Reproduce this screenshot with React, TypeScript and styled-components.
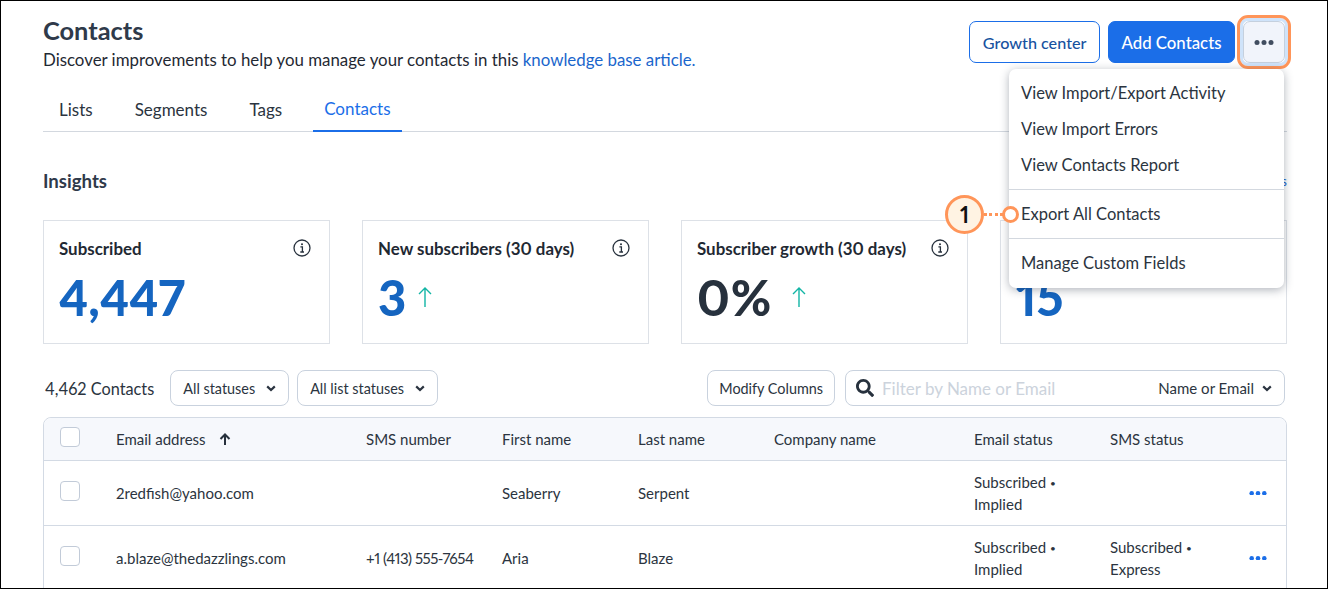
import React, { FC } from 'react';
import styled, { createGlobalStyle } from 'styled-components';
import { FaSearch } from 'react-icons/fa';

const GlobalStyle = createGlobalStyle`
  html, body {
    margin: 0;
    padding: 0;
    background: #fff;
  }
  body {
    font-family: Lato, 'Liberation Sans', sans-serif;
    font-variant-numeric: proportional-nums;
    color: #2b3440;
  }
`;

const Frame = styled.div`
  position: relative;
  box-sizing: border-box;
  width: 1328px;
  height: 589px;
  padding: 0 40px 0 42px;
  border: 1px solid #000;
  overflow: hidden;
  background: #fff;
`;

const Header = styled.div`
  display: flex;
  justify-content: space-between;
  align-items: flex-start;
  height: 91px;
  padding-top: 14px;
  box-sizing: border-box;
`;

const Title = styled.h1`
  margin: 0;
  font-size: 25.4px;
  line-height: 30px;
  font-weight: 700;
  color: #2f3a4a;
`;

const Lead = styled.p`
  margin: 4px 0 0;
  font-size: 16.85px;
  line-height: 22px;
  color: #1f2933;
`;

const Link = styled.a`
  color: #1a66cc;
`;

const Actions = styled.div`
  display: flex;
  gap: 8px;
  margin: 6px 2px 0 0;
`;

const Button = styled.button<{ $primary?: boolean }>`
  height: 42px;
  padding: 0 12.5px;
  border-radius: 7px;
  border: 1px solid #1b6ee8;
  background: ${p => (p.$primary ? '#1b6ee8' : '#fff')};
  color: ${p => (p.$primary ? '#fff' : '#17529f')};
  font: 500 ${p => (p.$primary ? '16.8px' : '16.2px')} Lato, sans-serif;
`;

const MoreButton = styled.button`
  position: relative;
  display: flex;
  align-items: center;
  justify-content: center;
  width: 42px;
  height: 42px;
  padding: 0;
  border-radius: 7px;
  border: 1px solid #c5d0de;
  background: #f1f4fb;
  color: #414d60;

  &::after {
    content: '';
    position: absolute;
    inset: -7px;
    border: 3px solid #ff9559;
    border-radius: 11px;
    box-shadow: inset 0 0 0 3px #cfe3fa;
  }
`;

const Tabs = styled.div`
  display: flex;
  gap: 20px;
  height: 39px;
  padding-left: 5px;
  border-bottom: 1px solid #d3d8df;
`;

const Tab = styled.div<{ $active?: boolean }>`
  box-sizing: border-box;
  height: 40px;
  padding: ${p => (p.$active ? '6px' : '7px')} 11px 0;
  font-size: 17px;
  line-height: 22px;
  color: ${p => (p.$active ? '#1b6ee8' : '#2b3440')};
  border-bottom: 2px solid ${p => (p.$active ? '#1b6ee8' : 'transparent')};
`;

const InsightsRow = styled.div`
  display: flex;
  justify-content: space-between;
  align-items: center;
  height: 38px;
  margin-top: 30px;
`;

const SectionTitle = styled.h2`
  margin: 0;
  font-size: 18.6px;
  font-weight: 700;
  color: #2f3a4a;
`;

const SmallLink = styled.a`
  font-size: 13px;
  color: #1a66cc;
`;

const Cards = styled.div`
  display: grid;
  grid-template-columns: repeat(4, 287px);
  gap: 32px;
  margin-top: 20px;
`;

const Card = styled.div`
  box-sizing: border-box;
  height: 124px;
  padding: 15px 18px 0 15px;
  border: 1px solid #dde1e7;
`;

const CardHead = styled.div`
  display: flex;
  justify-content: space-between;
  align-items: center;
  min-height: 24px;
  font-size: 16.9px;
  font-weight: 700;
  color: #1f2933;
`;

const CardValue = styled.div<{ $dark?: boolean }>`
  display: flex;
  align-items: center;
  gap: ${p => (p.$dark ? '20px' : '12px')};
  margin-top: 7px;
  font-size: 49px;
  line-height: 60px;
  font-weight: 900;
  letter-spacing: ${p => (p.$dark ? '1px' : '0')};
  color: ${p => (p.$dark ? '#27313d' : '#1565c0')};
`;

const Toolbar = styled.div`
  display: flex;
  align-items: center;
  gap: 8px;
  height: 36px;
  margin: 26px 2px 0 0;
`;

const Count = styled.div`
  margin: 0 8px 0 2px;
  font-size: 16.3px;
  color: #2b3440;
`;

const Select = styled.div`
  box-sizing: border-box;
  display: flex;
  align-items: center;
  gap: 11px;
  height: 36px;
  padding: 0 12px;
  border: 1px solid #c9d2de;
  border-radius: 8px;
  font-size: 14.4px;
  color: #2b3440;
`;

const ToolButton = styled(Select)`
  margin: 0 2px 0 auto;
  padding: 0 11px;
  font-size: 14.4px;
`;

const Search = styled(Select)`
  width: 440px;
  padding: 0 12px 0 10px;
  gap: 8px;
  font-size: 15px;
`;

const Placeholder = styled.span`
  flex: 1;
  font-size: 17px;
  color: #ccd3dc;
`;

const Table = styled.div`
  margin-top: 11px;
  border: 1px solid #d3dae4;
  border-radius: 8px 8px 0 0;
`;

const Row = styled.div<{ $head?: boolean }>`
  box-sizing: border-box;
  display: grid;
  grid-template-columns: 72px 250px 136px 136px 136px 200px 136px 1fr 56px;
  align-items: center;
  height: ${p => (p.$head ? '43px' : '65px')};
  border-bottom: 1px solid #d3dae4;
  background: ${p => (p.$head ? '#f6f8fc' : '#fff')};
  border-radius: ${p => (p.$head ? '8px 8px 0 0' : '0')};
  font-size: 15px;
  line-height: 21px;
  color: #2b3440;
`;

const CheckCell = styled.div`
  padding: 0 0 4px 16px;
`;

const Check = styled.div`
  box-sizing: border-box;
  width: 20px;
  height: 20px;
  border: 1px solid #c2cbd8;
  border-radius: 4px;
  background: #fff;
`;

const SortCell = styled.div`
  display: flex;
  align-items: center;
  gap: 13px;
`;

const Phone = styled.div`
  letter-spacing: -0.5px;
`;

const Bullet = styled.span`
  font-size: 10px;
  vertical-align: 1px;
`;

const RowAction = styled.div`
  display: flex;
  justify-content: flex-end;
  padding-right: 19px;
  color: #1b6ee8;
`;

const Menu = styled.div`
  position: absolute;
  left: 1008px;
  top: 68px;
  box-sizing: border-box;
  width: 275px;
  height: 219px;
  background: #fff;
  border-radius: 7px;
  box-shadow: 0 2px 10px rgba(30, 40, 60, 0.35);
`;

const MenuItem = styled.div`
  height: 36px;
  padding-left: 12px;
  font-size: 16.5px;
  line-height: 36px;
  color: #2b3440;
`;

const MenuGroup = styled.div`
  padding: 6px 0;

  & + & {
    border-top: 1px solid #d3d8df;
  }
`;

const Callout = styled.div`
  position: absolute;
  left: 944px;
  top: 194px;
  display: flex;
  align-items: center;
`;

const Badge = styled.div`
  box-sizing: border-box;
  width: 39px;
  height: 39px;
  border: 3px solid #ff9559;
  border-radius: 50%;
  background: #fff3e3;
  font-size: 22px;
  font-weight: 700;
  line-height: 33px;
  text-align: center;
  color: #111;
`;

const Leader = styled.div`
  width: 19px;
  border-top: 3px dotted #ff9559;
`;

const Target = styled.div`
  box-sizing: border-box;
  width: 17px;
  height: 17px;
  margin-left: -1px;
  border: 3px solid #ff9559;
  border-radius: 50%;
  background: #fff;
`;

const Dots: FC<{ size?: number }> = ({ size = 20 }) => (
  <svg width={size} height={size / 4} viewBox="0 0 20 5" fill="currentColor">
    <circle cx="3" cy="2.5" r="2.5" />
    <circle cx="10" cy="2.5" r="2.5" />
    <circle cx="17" cy="2.5" r="2.5" />
  </svg>
);

const Info: FC = () => (
  <svg width="18" height="18" viewBox="0 0 18 18" fill="none" stroke="#27313d">
    <circle cx="9" cy="9" r="8" strokeWidth="1.3" />
    <circle cx="9" cy="5.2" r="1" fill="#27313d" stroke="none" />
    <path d="M7.4 7.9H9.4V12.8M7.3 13H11" strokeWidth="1.3" />
  </svg>
);

const Chevron: FC = () => (
  <svg width="10" height="7" viewBox="0 0 10 7" fill="none" stroke="#2b3440" strokeWidth="2.2">
    <path d="M1.2 1.4L5 5L8.8 1.4" />
  </svg>
);

const Trend: FC = () => (
  <svg width="14" height="20" viewBox="0 0 14 20" fill="none" stroke="#12b5a5" strokeWidth="1.4">
    <path d="M7 20V1M1 7L7 1L13 7" />
  </svg>
);

const SortUp: FC = () => (
  <svg width="12" height="12" viewBox="0 0 12 12" fill="none" stroke="#27313d" strokeWidth="2">
    <path d="M6 12V1.5M1.5 6L6 1.5L10.5 6" />
  </svg>
);

const contacts = [
  {
    email: '2redfish@yahoo.com',
    sms: '',
    first: 'Seaberry',
    last: 'Serpent',
    emailStatus: ['Subscribed', 'Implied'],
    smsStatus: null,
  },
  {
    email: 'a.blaze@thedazzlings.com',
    sms: '+1 (413) 555-7654',
    first: 'Aria',
    last: 'Blaze',
    emailStatus: ['Subscribed', 'Implied'],
    smsStatus: ['Subscribed', 'Express'],
  },
];

const Status: FC<{ value: string[] | null }> = ({ value }) => (
  <div>
    {value && (
      <>
        <div>{value[0]} <Bullet>•</Bullet></div>
        <div>{value[1]}</div>
      </>
    )}
  </div>
);

const App: FC = () => (
  <Frame>
    <GlobalStyle />
    <Header>
      <div>
        <Title>Contacts</Title>
        <Lead>
          Discover improvements to help you manage your contacts in this <Link>knowledge base article.</Link>
        </Lead>
      </div>
      <Actions>
        <Button>Growth center</Button>
        <Button $primary>Add Contacts</Button>
        <MoreButton>
          <Dots />
        </MoreButton>
      </Actions>
    </Header>

    <Tabs>
      <Tab>Lists</Tab>
      <Tab>Segments</Tab>
      <Tab>Tags</Tab>
      <Tab $active>Contacts</Tab>
    </Tabs>

    <InsightsRow>
      <SectionTitle>Insights</SectionTitle>
      <SmallLink>Reports</SmallLink>
    </InsightsRow>

    <Cards>
      <Card>
        <CardHead>Subscribed <Info /></CardHead>
        <CardValue>4,447</CardValue>
      </Card>
      <Card>
        <CardHead>New subscribers (30 days) <Info /></CardHead>
        <CardValue>3 <Trend /></CardValue>
      </Card>
      <Card>
        <CardHead>Subscriber growth (30 days) <Info /></CardHead>
        <CardValue $dark>0% <Trend /></CardValue>
      </Card>
      <Card>
        <CardHead />
        <CardValue>15</CardValue>
      </Card>
    </Cards>

    <Toolbar>
      <Count>4,462 Contacts</Count>
      <Select>All statuses <Chevron /></Select>
      <Select>All list statuses <Chevron /></Select>
      <ToolButton>Modify Columns</ToolButton>
      <Search>
        <FaSearch size={18} color="#27313d" />
        <Placeholder>Filter by Name or Email</Placeholder>
        Name or Email <Chevron />
      </Search>
    </Toolbar>

    <Table>
      <Row $head>
        <CheckCell><Check /></CheckCell>
        <SortCell>Email address <SortUp /></SortCell>
        <div>SMS number</div>
        <div>First name</div>
        <div>Last name</div>
        <div>Company name</div>
        <div>Email status</div>
        <div>SMS status</div>
      </Row>
      {contacts.map(c => (
        <Row key={c.email}>
          <CheckCell><Check /></CheckCell>
          <div>{c.email}</div>
          <Phone>{c.sms}</Phone>
          <div>{c.first}</div>
          <div>{c.last}</div>
          <div />
          <Status value={c.emailStatus} />
          <Status value={c.smsStatus} />
          <RowAction><Dots size={18} /></RowAction>
        </Row>
      ))}
    </Table>

    <Menu>
      <MenuGroup>
        <MenuItem>View Import/Export Activity</MenuItem>
        <MenuItem>View Import Errors</MenuItem>
        <MenuItem>View Contacts Report</MenuItem>
      </MenuGroup>
      <MenuGroup><MenuItem>Export All Contacts</MenuItem></MenuGroup>
      <MenuGroup><MenuItem>Manage Custom Fields</MenuItem></MenuGroup>
    </Menu>

    <Callout>
      <Badge>1</Badge>
      <Leader />
      <Target />
    </Callout>
  </Frame>
);

export default App;
